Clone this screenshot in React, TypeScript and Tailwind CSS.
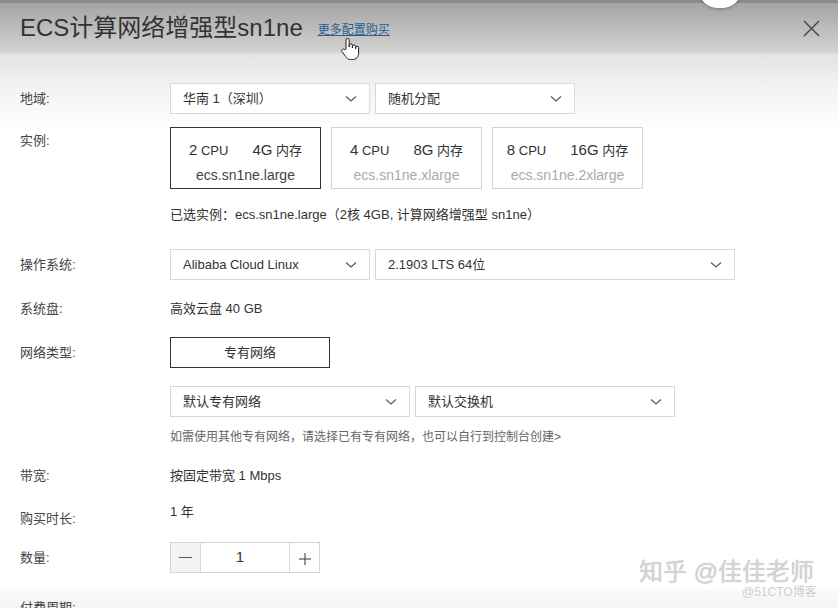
import React from "react";

const font = { fontFamily: '"Liberation Sans", "Noto Sans CJK SC", sans-serif' };

function Chevron() {
  return (
    <svg width="12" height="8" viewBox="0 0 12 8" className="shrink-0">
      <polyline points="1,1.5 6,6 11,1.5" fill="none" stroke="#555" strokeWidth="1.1" />
    </svg>
  );
}

function Select({ text, w }: { text: string; w: string }) {
  return (
    <div className={`${w} h-[31px] bg-white border border-[#d9d9d9] flex items-center justify-between pl-[12px] pr-[12px] text-[13px] text-[#333]`}>
      <span>{text}</span>
      <Chevron />
    </div>
  );
}

function Label({ children, className = "" }: { children: React.ReactNode; className?: string }) {
  return <div className={`w-[150px] shrink-0 text-[13px] leading-[20px] text-[#444] ${className}`}>{children}</div>;
}

function Card({ cpu, mem, name, selected }: { cpu: string; mem: string; name: string; selected?: boolean }) {
  return (
    <div
      className={`w-[151px] h-[62px] flex flex-col items-center pt-[12px] border ${
        selected ? "border-[#333]" : "border-[#d4d4d4]"
      } bg-white`}
    >
      <div className="flex items-baseline gap-[24px] text-[#333] leading-[20px]">
        <span>
          <span className="text-[15px]">{cpu}</span>
          <span className="text-[13px]"> CPU</span>
        </span>
        <span>
          <span className="text-[15px]">{mem}</span>
          <span className="text-[13px]"> 内存</span>
        </span>
      </div>
      <div className={`text-[14px] leading-[20px] mt-[4px] ${selected ? "text-[#444]" : "text-[#aaa]"}`}>{name}</div>
    </div>
  );
}

export default function App() {
  return (
    <div className="relative w-[838px] h-[608px] overflow-hidden bg-white" style={font}>
      {/* header */}
      <div className="relative h-[54px] border-t-[3px] border-[#8c8c8c] bg-[linear-gradient(to_bottom,#a4a4a4,#d4d4d4)] border-b border-b-[#dedede] flex items-center pl-[20px]">
        <div className="text-[24px] text-[#333] leading-[30px] -mt-[1px]">ECS计算网络增强型sn1ne</div>
        <a className="ml-[15px] mt-[3px] text-[12px] text-[#2a5d8c] underline leading-[16px]">更多配置购买</a>
        <div className="absolute right-[18px] top-[17px]">
          <svg width="17" height="17" viewBox="0 0 17 17">
            <line x1="1" y1="1" x2="16" y2="16" stroke="#444" strokeWidth="1.4" />
            <line x1="16" y1="1" x2="1" y2="16" stroke="#444" strokeWidth="1.4" />
          </svg>
        </div>
      </div>

      {/* decorative top circle */}
      <div className="absolute left-[698px] top-[-32px] w-[44px] h-[40px] rounded-full bg-white shadow-[0_1px_3px_rgba(0,0,0,0.3)]" />

      {/* cursor */}
      <div className="absolute left-[340px] top-[37px]">
        <svg width="22" height="24" viewBox="0 0 22 24">
          <path
            d="M6 12 V3 a1.6 1.6 0 0 1 3.2 0 V10 V8.5 a1.6 1.6 0 0 1 3.2 0 V11 V9.5 a1.6 1.6 0 0 1 3.2 0 V12 V10.8 a1.5 1.5 0 0 1 3 0 V16 c0 4 -2.5 6.5 -6 6.5 h-2 c-2.5 0 -3.8 -1.2 -5 -3 L2 14.5 a1.5 1.5 0 0 1 2.4 -1.8 Z"
            fill="#fff"
            stroke="#222"
            strokeWidth="1"
            strokeLinejoin="round"
          />
        </svg>
      </div>

      {/* body */}
      <div className="bg-[linear-gradient(to_bottom,#e3e3e3_0px,#f3f3f3_35px,#ffffff_75px)] pt-[29px] pl-[20px]">
        {/* 地域 */}
        <div className="flex items-center">
          <Label>地域:</Label>
          <div className="flex gap-[5px]">
            <Select text="华南 1（深圳）" w="w-[200px]" />
            <Select text="随机分配" w="w-[200px]" />
          </div>
        </div>

        {/* 实例 */}
        <div className="flex mt-[13px]">
          <Label className="pt-[4px]">实例:</Label>
          <div className="flex gap-[10px]">
            <Card cpu="2" mem="4G" name="ecs.sn1ne.large" selected />
            <Card cpu="4" mem="8G" name="ecs.sn1ne.xlarge" />
            <Card cpu="8" mem="16G" name="ecs.sn1ne.2xlarge" />
          </div>
        </div>
        <div className="flex mt-[16px]">
          <Label> </Label>
          <div className="text-[13px] leading-[20px] text-[#333]">已选实例：ecs.sn1ne.large（2核 4GB, 计算网络增强型 sn1ne）</div>
        </div>

        {/* 操作系统 */}
        <div className="flex items-center mt-[24px]">
          <Label>操作系统:</Label>
          <div className="flex gap-[5px]">
            <Select text="Alibaba Cloud Linux" w="w-[200px]" />
            <Select text="2.1903 LTS 64位" w="w-[360px]" />
          </div>
        </div>

        {/* 系统盘 */}
        <div className="flex mt-[19px]">
          <Label>系统盘:</Label>
          <div className="text-[13px] leading-[20px] text-[#333]">高效云盘 40 GB</div>
        </div>

        {/* 网络类型 */}
        <div className="flex items-center mt-[18px]">
          <Label>网络类型:</Label>
          <div className="w-[160px] h-[31px] border border-[#333] bg-white flex items-center justify-center text-[13px] text-[#333]">
            专有网络
          </div>
        </div>
        <div className="flex mt-[18px]">
          <Label> </Label>
          <div className="flex gap-[5px]">
            <Select text="默认专有网络" w="w-[240px]" />
            <Select text="默认交换机" w="w-[260px]" />
          </div>
        </div>
        <div className="flex mt-[11px]">
          <Label> </Label>
          <div className="text-[12px] leading-[18px] text-[#666]">
            如需使用其他专有网络，请选择已有专有网络，也可以自行到控制台创建&gt;
          </div>
        </div>

        {/* 带宽 */}
        <div className="flex mt-[20px]">
          <Label>带宽:</Label>
          <div className="text-[13px] leading-[20px] text-[#333]">按固定带宽 1 Mbps</div>
        </div>

        {/* 购买时长 */}
        <div className="flex mt-[16px]">
          <Label className="pt-[7px]">购买时长:</Label>
          <div className="text-[13px] leading-[20px] text-[#333]">1 年</div>
        </div>

        {/* 数量 */}
        <div className="flex items-center mt-[13px]">
          <Label>数量:</Label>
          <div className="flex h-[31px] border border-[#d4d4d4] bg-white">
            <div className="w-[30px] bg-[#f3f3f3] border-r border-[#d9d9d9] flex items-center justify-center">
              <div className="w-[13px] h-[1.5px] bg-[#555]" />
            </div>
            <div className="w-[88px] flex items-start justify-center pt-[4px] pr-[10px] text-[15px] text-[#333] leading-[20px]">1</div>
            <div className="w-[30px] border-l border-[#d9d9d9] flex items-center justify-center pt-[3px]">
              <svg width="12" height="12" viewBox="0 0 12 12">
                <line x1="6" y1="0" x2="6" y2="12" stroke="#444" strokeWidth="1.1" />
                <line x1="0" y1="6" x2="12" y2="6" stroke="#444" strokeWidth="1.1" />
              </svg>
            </div>
          </div>
        </div>
      </div>

      {/* bottom band */}
      <div className="absolute left-0 right-0 top-[589px] h-[19px] bg-[linear-gradient(to_bottom,#fafafa,#f3f3f3)] pl-[20px]">
        <div className="text-[13px] leading-[20px] text-[#444] mt-[9px]">付费周期:</div>
      </div>

      {/* watermark */}
      <div className="absolute left-[639px] top-[557px] text-[24px] leading-[30px] text-[#d4d4d4] [text-shadow:0_0_1px_#bdbdbd]">
        知乎 @佳佳老师
      </div>
      <div className="absolute left-[742px] top-[584px] text-[12px] leading-[16px] text-[#cfcfcf]">@51CTO博客</div>
    </div>
  );
}
